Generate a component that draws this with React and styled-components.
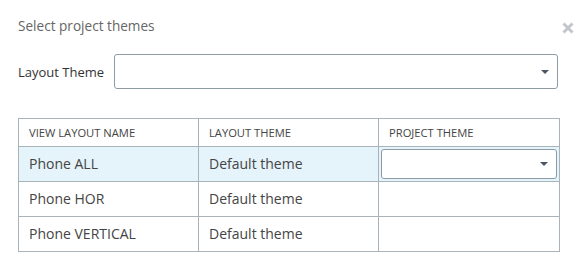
import styled, { createGlobalStyle } from "styled-components";

const Global = createGlobalStyle`
  body {
    margin: 0;
    background: #fff;
    font-family: "Open Sans", "Noto Sans", sans-serif;
  }
`;

const Dialog = styled.div`
  width: 584px;
  height: 275px;
  box-sizing: border-box;
  padding: 16px 26px 0 18px;
  position: relative;
  background: #fff;
`;

const Title = styled.div`
  font-size: 13.6px;
  color: #666;
  line-height: 20px;
`;

const Close = styled.div`
  position: absolute;
  top: 22px;
  right: 10px;
  width: 12px;
  height: 12px;
  svg {
    display: block;
  }
`;

const FieldRow = styled.div`
  display: flex;
  align-items: center;
  gap: 10px;
  margin-top: 18px;
`;

const Label = styled.label`
  font-size: 13px;
  color: #333;
`;

const Select = styled.div`
  flex: ${(p) => (p.$fill ? 1 : "none")};
  height: ${(p) => p.$h}px;
  box-sizing: border-box;
  border: 1px solid #8d9ba5;
  border-radius: 3px;
  background: #fff;
  display: flex;
  align-items: center;
  justify-content: flex-end;
  padding-right: 8px;
`;

const Caret = styled.span`
  width: 0;
  height: 0;
  border-left: 4px solid transparent;
  border-right: 4px solid transparent;
  border-top: 4px solid #4a5663;
`;

const Table = styled.table`
  margin-top: 29px;
  width: 541px;
  border-collapse: collapse;
  table-layout: fixed;
`;

const Th = styled.th`
  height: 27px;
  border: 1px solid #a8b3bb;
  text-align: left;
  font-weight: 400;
  font-size: 11.2px;
  color: #444;
  padding: 0 10px;
  text-transform: uppercase;
`;

const Row = styled.tr`
  background: ${(p) => (p.$active ? "#e5f3fa" : "#fff")};
`;

const Td = styled.td`
  height: 33px;
  border: 1px solid #a8b3bb;
  font-size: 14px;
  color: #444;
  padding: 0 10px 1px;
  &:last-child {
    padding: 0 2px 1px;
  }
`;

const rows = [
  { name: "Phone ALL", theme: "Default theme", active: true },
  { name: "Phone HOR", theme: "Default theme" },
  { name: "Phone VERTICAL", theme: "Default theme" },
];

const App = () => {
  return (
    <Dialog>
      <Global />
      <Title>Select project themes</Title>
      <Close>
        <svg width="12" height="12" viewBox="0 0 12 12">
          <path d="M1.5 1.5 L10.5 10.5 M10.5 1.5 L1.5 10.5" stroke="#c3c7cb" strokeWidth="3" />
        </svg>
      </Close>
      <FieldRow>
        <Label>Layout Theme</Label>
        <Select $fill $h={35}>
          <Caret />
        </Select>
      </FieldRow>
      <Table>
        <colgroup>
          <col style={{ width: 180 }} />
          <col style={{ width: 180 }} />
          <col style={{ width: 181 }} />
        </colgroup>
        <thead>
          <tr>
            <Th>View layout name</Th>
            <Th>Layout theme</Th>
            <Th>Project theme</Th>
          </tr>
        </thead>
        <tbody>
          {rows.map((r) => (
            <Row key={r.name} $active={r.active}>
              <Td>{r.name}</Td>
              <Td>{r.theme}</Td>
              <Td>
                {r.active && (
                  <Select $fill $h={30}>
                    <Caret />
                  </Select>
                )}
              </Td>
            </Row>
          ))}
        </tbody>
      </Table>
    </Dialog>
  );
};

export default App;
